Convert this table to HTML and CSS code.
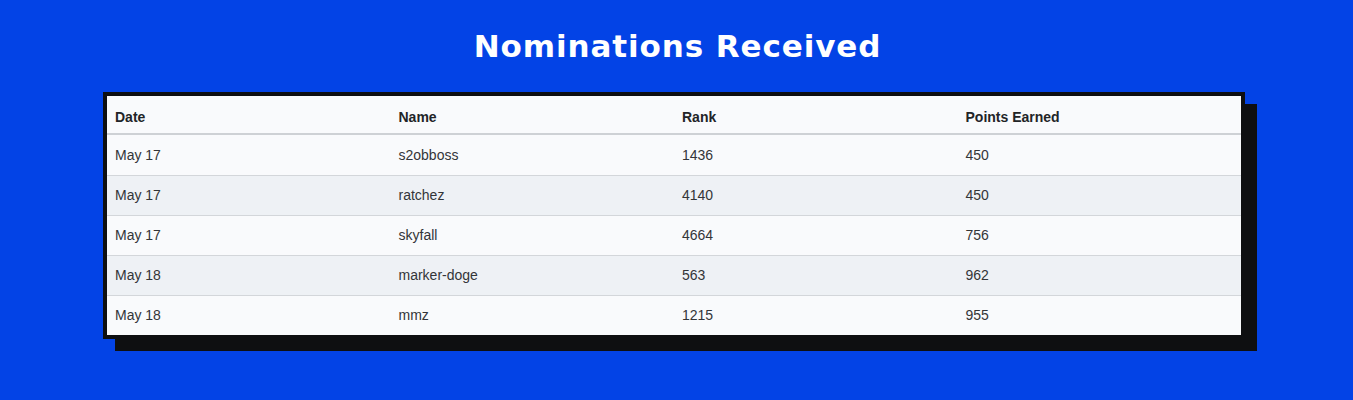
FILE: index.html
```html
<!DOCTYPE html>
<html lang="en">
<head>
<meta charset="utf-8">
<title>Nominations Received</title>
<link rel="stylesheet" href="styles.css">
</head>
<body>
<main class="page">
  <h1 class="title">Nominations Received</h1>
  <div class="wrap">
    <div class="card">
      <table class="table">
        <thead>
          <tr><th>Date</th><th>Name</th><th>Rank</th><th>Points Earned</th></tr>
        </thead>
        <tbody>
          <tr><td>May 17</td><td>s2obboss</td><td>1436</td><td>450</td></tr>
          <tr><td>May 17</td><td>ratchez</td><td>4140</td><td>450</td></tr>
          <tr><td>May 17</td><td>skyfall</td><td>4664</td><td>756</td></tr>
          <tr><td>May 18</td><td>marker-doge</td><td>563</td><td>962</td></tr>
          <tr><td>May 18</td><td>mmz</td><td>1215</td><td>955</td></tr>
        </tbody>
      </table>
    </div>
  </div>
</main>
</body>
</html>
```

FILE: styles.css
```css
html, body {
  margin: 0;
  padding: 0;
  background: #0343e6;
}
body {
  font-family: "Liberation Sans", Arial, Helvetica, sans-serif;
  min-height: 400px;
}
.page {
  display: flex;
  flex-direction: column;
  padding-top: 28px;
}
.title {
  margin: 0;
  text-align: center;
  color: #ffffff;
  font-family: "DejaVu Sans", "Liberation Sans", sans-serif;
  font-size: 31px;
  line-height: 37px;
  font-weight: 700;
  letter-spacing: 0.9px;
  padding-left: 2px;
}
.wrap {
  padding: 27px 108px 0 103px;
}
.card {
  border: 4px solid #0e0f11;
  background: #f9fafc;
  box-shadow: 12px 12px 0 #0e0f11;
}
.table {
  width: 100%;
  border-collapse: collapse;
  table-layout: fixed;
  font-size: 14px;
  line-height: 16px;
}
.table th {
  text-align: left;
  font-weight: 700;
  color: #222427;
  padding: 13px 8px 8px;
  border-bottom: 2px solid #ced1d5;
  background: #f9fafc;
}
.table td {
  color: #333538;
  padding: 11px 8px 12px;
  border-top: 1px solid #d3d6da;
}
.table tbody tr:first-child td {
  border-top: 0;
  padding-top: 12px;
}
.table tbody tr:nth-child(odd) td {
  background: #f9fafc;
}
.table tbody tr:nth-child(even) td {
  background: #eef1f5;
}
```
